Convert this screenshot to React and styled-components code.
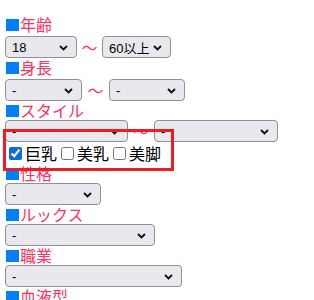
import React from 'react';
import styled, { createGlobalStyle } from 'styled-components';

const GlobalStyle = createGlobalStyle`
  body {
    margin: 0;
    background: #fff;
    font-family: "Noto Sans CJK JP", "Noto Sans", sans-serif;
  }
`;

const Page = styled.div`
  position: relative;
  padding: 15px 5px 0;
`;

const Label = styled.div`
  display: flex;
  align-items: center;
  height: 19px;
  font-size: 16px;
  line-height: 19px;
  color: #ff3366;
  margin-left: 1px;
`;

const Square = styled.span`
  display: inline-block;
  width: 13px;
  height: 12px;
  margin-right: 1px;
  background: #0080ff;
`;

const Row = styled.div`
  display: flex;
  align-items: center;
  height: 22px;
  margin-top: ${(p) => p.$top || 0}px;
`;

const SelectBox = styled.div`
  position: relative;
  box-sizing: border-box;
  width: ${(p) => p.$w}px;
  height: 22px;
  border: 1px solid #8f8f9d;
  border-radius: 4px;
  background: #e9e9ed;
  display: flex;
  align-items: center;
  padding-left: 6px;
  font-size: 13px;
  color: #000;
  font-family: "Liberation Sans", "Noto Sans CJK JP", sans-serif;
`;

const Chevron = styled.svg`
  position: absolute;
  right: 8px;
  top: 8px;
`;

const Tilde = styled.span`
  color: #ff3366;
  font-size: 16px;
  width: ${(p) => p.$w}px;
  text-align: center;
`;

const CheckRow = styled.div`
  display: flex;
  align-items: center;
  height: 22px;
  font-size: 16px;
  color: #000;
`;

const CheckLabel = styled.label`
  display: flex;
  align-items: center;
`;

const Box = styled.input`
  width: 13px;
  height: 13px;
  margin: 3px 3px 3px 4px;
  accent-color: #0b6cda;
`;

const Highlight = styled.div`
  position: absolute;
  left: 3px;
  top: 129px;
  width: 171px;
  height: 42px;
  box-sizing: border-box;
  border: 3px solid #ee1c25;
  pointer-events: none;
`;

const Select = ({ w, value = '-' }) => (
  <SelectBox $w={w}>
    {value}
    <Chevron width="9" height="6" viewBox="0 0 9 6">
      <path d="M1 1 L4.5 4.5 L8 1" fill="none" stroke="#111" strokeWidth="1.9" />
    </Chevron>
  </SelectBox>
);

const Heading = ({ children }) => (
  <Label>
    <Square />
    {children}
  </Label>
);

export default function App() {
  return (
    <Page>
      <GlobalStyle />
      <Heading>年齢</Heading>
      <Row $top={2}>
        <Select w={72} value="18" />
        <Tilde $w={25}>〜</Tilde>
        <Select w={69} value="60以上" />
      </Row>
      <Heading>身長</Heading>
      <Row $top={2}>
        <Select w={77} />
        <Tilde $w={27}>〜</Tilde>
        <Select w={76} />
      </Row>
      <Heading>スタイル</Heading>
      <Row>
        <Select w={123} />
        <Tilde $w={26}>〜</Tilde>
        <Select w={124} />
      </Row>
      <CheckRow>
        <CheckLabel><Box type="checkbox" defaultChecked />巨乳</CheckLabel>
        <CheckLabel><Box type="checkbox" />美乳</CheckLabel>
        <CheckLabel><Box type="checkbox" />美脚</CheckLabel>
      </CheckRow>
      <Heading>性格</Heading>
      <Row>
        <Select w={96} />
      </Row>
      <Heading>ルックス</Heading>
      <Row>
        <Select w={150} />
      </Row>
      <Heading>職業</Heading>
      <Row>
        <Select w={177} />
      </Row>
      <Heading>血液型</Heading>
      <Row>
        <Select w={96} />
      </Row>
      <Highlight />
    </Page>
  );
}
